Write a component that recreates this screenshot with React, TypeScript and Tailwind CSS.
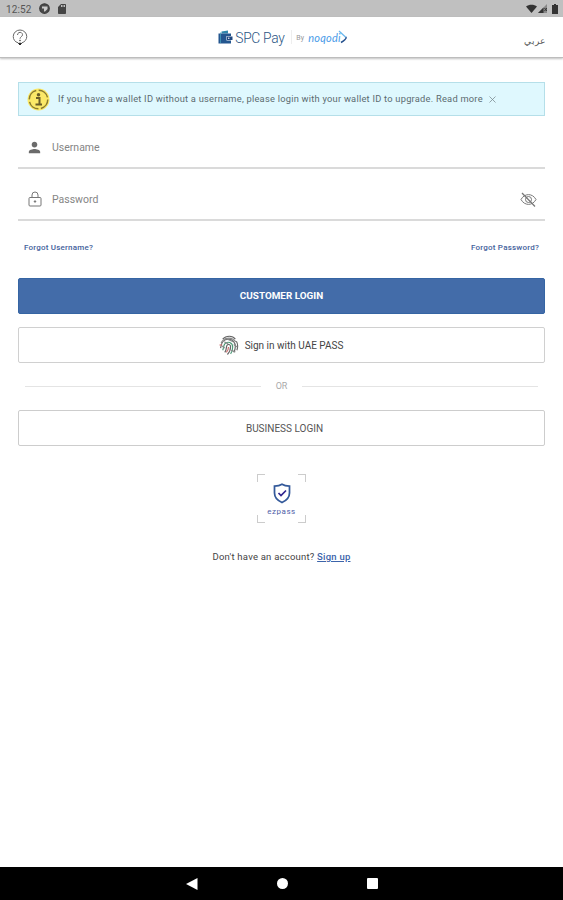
import { useState } from "react";
import { MdPerson, MdSdCard } from "react-icons/md";

const StatusBar = () => {
  return (
    <div className="flex h-[17px] items-center bg-[#c0c0c0] pr-[5px] pl-[6px] text-[#444]">
      <span className="w-[33px] pt-[2px] text-[10px] leading-none tracking-[0.1px] text-[#555]">12:52</span>
      <svg className="h-[11px] w-[11px]" viewBox="0 0 22 22">
        <circle cx="11" cy="11" r="9.5" fill="#4a4a4a" stroke="#3c3c3c" strokeWidth="2.5" />
        <path d="M6 7h11v5l-5 5h-2v-6H6z" fill="#c9c9c9" />
      </svg>
      <MdSdCard className="ml-[6px] h-[12px] w-[12px]" />
      <div className="ml-auto flex items-center">
        <svg className="h-[9px] w-[11px]" viewBox="0 0 22 18">
          <path d="M0 5C6 0 16 0 22 5L11 18z" fill="#333" />
        </svg>
        <svg className="ml-px h-[9px] w-[9px]" viewBox="0 0 18 18">
          <path d="M18 0v18H0z" fill="#888" />
          <path d="M11 7v11H0z" fill="#333" />
          <path d="M13 8l5 6M18 8l-5 6" stroke="#333" strokeWidth="2" />
        </svg>
        <svg className="ml-[5px] h-[10px] w-[6px]" viewBox="0 0 12 20">
          <path d="M4 0h4v2h4v18H0V2h4z" fill="#333" />
        </svg>
      </div>
    </div>
  );
};

const Header = () => {
  return (
    <header className="flex h-[41px] items-center justify-between border-b border-[#bdbdbd] bg-white pr-[18px] pl-[12px] shadow-[0_1px_2px_rgba(0,0,0,0.25)]">
      <svg className="h-[17px] w-[16px]" viewBox="0 0 32 34" fill="none" stroke="#6a6a6a" strokeWidth="2">
        <path d="M12 27.500C6 26 2.500 21 2.500 15A13.500 13 0 0 1 29.500 15c0 6-4 11-9.500 12.500L16 32z" />
        <path d="M11 12c0-7 10-7 10-.5 0 4-5 4-5 8" />
        <circle cx="16" cy="23" r="1" fill="#444" />
        <path d="M13.500 28.500h5L16 32z" fill="#222" stroke="#222" />
      </svg>
      <div className="ml-[14px] flex h-full items-center">
        <svg className="h-[14px] w-[15px]" viewBox="0 0 30 28">
          <path d="M7 7V3l13-2v6z" fill="#2e86ab" />
          <path d="M1 7h25v5h-9v9h9v6H1z" fill="#24568f" />
          <path d="M18 13h11v7H18z" fill="#1f477f" />
          <circle cx="21.500" cy="16.500" r="1.500" fill="#fff" />
          <path d="M5 5v21" stroke="#4aa4bd" strokeWidth="1.500" />
        </svg>
        <span className="ml-[2px] w-[50px] pt-[3px] text-[13.8px] leading-none font-light tracking-[-0.3px] whitespace-nowrap text-[#2c5584]">
          SPC Pay
        </span>
        <span className="ml-[6px] h-[14px] w-px bg-[#eee]" />
        <span className="ml-[4px] w-[12px] pt-[2px] text-[7px] leading-none text-[#999]">By</span>
        <span className="pt-px font-['Lato'] text-[11px] leading-none tracking-[0.2px] text-[#4a9be8] italic">noqodi</span>
        <svg className="-ml-[6px] h-[15px] w-[13px]" viewBox="0 0 26 30" fill="none" strokeWidth="2.500">
          <path d="M8 2L22 15" stroke="#69b7ee" />
          <path d="M22 14c2 3-5 8-10 11" stroke="#244f8c" strokeWidth="3" />
        </svg>
      </div>
      <span className="pt-[8px] text-[9.3px] leading-none text-[#555]" lang="ar" dir="rtl">
        عربي
      </span>
    </header>
  );
};

const InfoBanner = ({ onClose }: { onClose: () => void }) => {
  return (
    <div className="flex h-[34px] items-center border border-[#b5dfe9] bg-[#dff8fe] pl-[8px]">
      <svg className="h-[23px] w-[23px]" viewBox="0 0 46 46">
        <circle cx="23" cy="23" r="22" fill="#fbe968" />
        <circle cx="23" cy="23" r="18.500" fill="none" stroke="#8a7b2f" strokeWidth="3" strokeDasharray="24 5" />
        <circle cx="23" cy="13.500" r="3.500" fill="#695d28" />
        <path d="M18 20h7v12M17 33h13" fill="none" stroke="#695d28" strokeWidth="4" />
      </svg>
      <p className="ml-[8px] w-[425px] text-[9.3px] leading-none tracking-[0.238px] whitespace-nowrap text-[#5c6b70]">
        If you have a wallet ID without a username, please login with your wallet ID to upgrade. Read more
      </p>
      <button className="ml-[6px]" onClick={onClose}>
        <svg className="h-[7px] w-[7px]" viewBox="0 0 14 14" stroke="#78878c" strokeWidth="1.500">
          <path d="M1 1l12 12M13 1L1 13" />
        </svg>
      </button>
    </div>
  );
};

const LockIcon = () => (
  <svg className="h-[16px] w-[14px]" viewBox="0 0 28 32" fill="none" stroke="#777" strokeWidth="2">
    <rect x="2" y="13" width="24" height="17" rx="2" />
    <path d="M8 13V8a6 6 0 0 1 12 0v5" />
    <circle cx="14" cy="21" r="1.500" fill="#555" />
  </svg>
);

const EyeOffIcon = () => (
  <svg className="h-[15px] w-[17px]" viewBox="0 0 34 30" fill="none" stroke="#777" strokeWidth="2">
    <path d="M2 15C9 2 25 2 32 15C25 28 9 28 2 15z" />
    <circle cx="17" cy="15" r="6" />
    <path d="M4 2l26 27" strokeWidth="2.500" />
  </svg>
);

const Fingerprint = () => (
  <svg className="h-[20px] w-[20px]" viewBox="1 1 38 38" fill="none" stroke="#666" strokeWidth="2.200">
    <path d="M8 9C15 1 27 2 32 9" />
    <path d="M5 16C10 5 25 4 33 14" stroke="#888" />
    <path d="M34 13c3 5 3 11 1 17" />
    <path d="M4 26c1-12 8-17 15-17 8 0 13 6 13 14 0 4-1 8-3 11" />
    <path d="M2 20h5" stroke="#d07070" />
    <path d="M8 30c2-4 1-8 4-12 5-6 15-3 15 6 0 5-1 9-4 13" stroke="#4d9a78" />
    <path d="M12 34c4-5 2-9 4-13 2-4 7-2 7 2 0 6-2 11-6 15" />
    <path d="M19 24c0 4-2 8-4 10" stroke="#cf6b6b" />
    <path d="M13 7l15 7M29 19l7 5M7 22l5 4M11 14l7 4M24 30l8 3" stroke="#888" />
  </svg>
);

const EzPass = () => (
  <div className="relative mx-auto mt-[28px] flex h-[49px] w-[49px] flex-col items-center pt-[9px]">
    <span className="absolute top-0 left-0 h-[8px] w-[8px] border-t border-l border-[#ccc]" />
    <span className="absolute top-0 right-0 h-[8px] w-[8px] border-t border-r border-[#ccc]" />
    <span className="absolute bottom-0 left-0 h-[8px] w-[8px] border-b border-l border-[#ccc]" />
    <span className="absolute right-0 bottom-0 h-[8px] w-[8px] border-r border-b border-[#ccc]" />
    <svg className="h-[21px] w-[18px]" viewBox="0 0 36 42" fill="none" stroke="#33599a" strokeWidth="3.500">
      <path d="M18 2.500C14 5 8 6 3 6v14c0 9 6 15 15 19 9-4 15-10 15-19V6C28 6 22 5 18 2.500z" />
      <path d="M11 20l5 5 10-10" stroke="#30258f" />
    </svg>
    <span className="mt-[4px] text-[8px] leading-none tracking-[0.5px] text-[#5060a8]">ezpass</span>
  </div>
);

const App = () => {
  const [showBanner, setShowBanner] = useState(true);
  const [showPassword, setShowPassword] = useState(false);

  return (
    <div className="flex h-[900px] w-[563px] flex-col overflow-hidden bg-white font-['Roboto',sans-serif]">
      <StatusBar />
      <Header />
      <main className="flex-1 px-[18px] pt-[24px]">
        {showBanner && <InfoBanner onClose={() => setShowBanner(false)} />}

        <div className="mt-[11px] flex h-[42px] items-center border-b-2 border-[#dadada] pl-[8px]">
          <MdPerson className="h-[17px] w-[17px] text-[#6b6b6b]" />
          <input
            className="ml-[9px] flex-1 pt-[2px] text-[10.5px] outline-none placeholder:text-[#858585]"
            placeholder="Username"
          />
        </div>
        <div className="mt-[10px] flex h-[42px] items-center border-b-2 border-[#dadada] pr-[8px] pl-[10px]">
          <LockIcon />
          <input
            type={showPassword ? "text" : "password"}
            className="ml-[10px] flex-1 pt-px text-[10.5px] outline-none placeholder:text-[#858585]"
            placeholder="Password"
          />
          <button onClick={() => setShowPassword(!showPassword)}>
            <EyeOffIcon />
          </button>
        </div>

        <div className="mt-[22px] flex h-[9px] items-center justify-between px-[6px] text-[8px] leading-none font-medium tracking-[0.21px] text-[#43619c]">
          <a href="#">Forgot Username?</a>
          <a href="#">Forgot Password?</a>
        </div>

        <button className="mt-[26px] flex h-[36px] w-full items-center justify-center rounded-[2px] border border-[#3565a3] bg-[#436ca9] pt-px text-[9.9px] font-bold text-white">
          CUSTOMER LOGIN
        </button>
        <button className="mt-[13px] flex h-[36px] w-full items-center justify-center rounded-[2px] border border-[#d0d0d0] pr-px text-[10px] text-[#444]">
          <Fingerprint />
          <span className="ml-[6px]">Sign in with UAE PASS</span>
        </button>

        <div className="mt-[17px] flex h-[12px] items-center px-[7px] text-[9px] leading-none text-[#aaa]">
          <span className="h-px flex-1 bg-[#e4e4e4]" />
          <span className="w-[41px] pt-px text-center">OR</span>
          <span className="h-px flex-1 bg-[#e4e4e4]" />
        </div>

        <button className="mt-[18px] flex h-[36px] w-full items-center justify-center rounded-[2px] border border-[#cdcdcd] pl-[6px] text-[10px] text-[#555]">
          BUSINESS LOGIN
        </button>

        <EzPass />

        <p className="mt-[28px] text-center text-[9.5px] leading-[12px] tracking-[0.22px] text-[#444]">
          Don't have an account?{" "}
          <a href="#" className="font-medium text-[#3c64aa] underline">
            Sign up
          </a>
        </p>
      </main>
      <nav className="flex h-[33px] items-center justify-center gap-[79px] bg-black">
        <svg className="h-[12px] w-[12px]" viewBox="0 0 12 12" fill="#fff">
          <path d="M0 6L11.500 0v12z" />
        </svg>
        <span className="h-[11px] w-[11px] rounded-full bg-white" />
        <span className="h-[11px] w-[11px] rounded-[1px] bg-white" />
      </nav>
    </div>
  );
};

export default App;
